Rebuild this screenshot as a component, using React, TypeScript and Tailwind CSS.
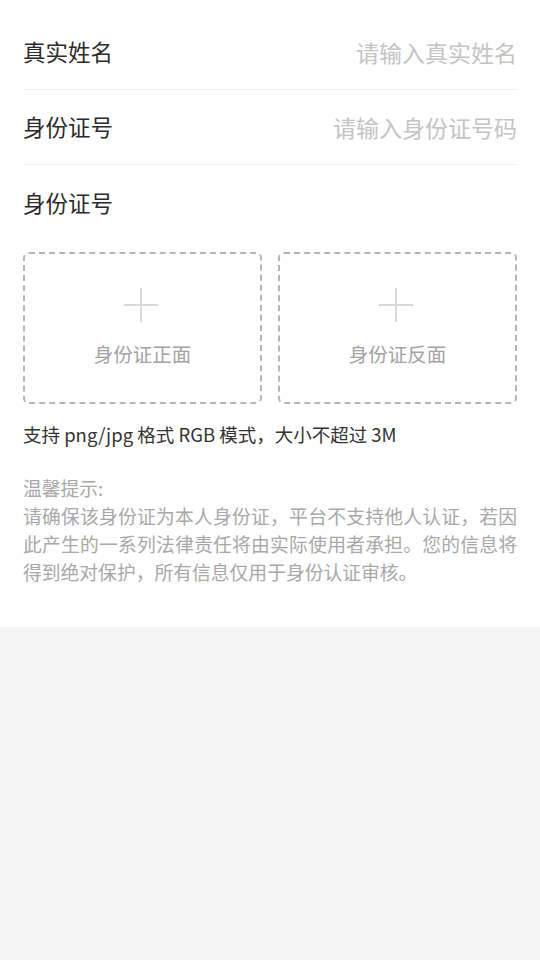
const font = { fontFamily: '"Noto Sans CJK SC", "Noto Sans", sans-serif' };

function FieldRow({ label, placeholder }: { label: string; placeholder: string }) {
  return (
    <div className="flex h-[75px] items-center justify-between border-b border-[#efefef]">
      <span className="text-[22.5px] text-[#2b2b2b]">{label}</span>
      <input
        className="w-[280px] bg-transparent text-right text-[23px] text-[#333333] outline-none placeholder:text-[#c4c4c4]"
        placeholder={placeholder}
        style={font}
      />
    </div>
  );
}

function UploadBox({ text }: { text: string }) {
  return (
    <div className="flex h-[152px] flex-col items-center justify-center rounded-[6px] border-2 border-dashed border-[#b5b5b5] pb-[4px]">
      <svg width="36" height="36" viewBox="0 0 36 36" className="-ml-[3px]">
        <path d="M18 1v34M1 18h34" stroke="#d9d9d9" strokeWidth="2" fill="none" />
      </svg>
      <span className="mt-[19px] text-[19.5px] leading-[24px] text-[#a3a3a3]">{text}</span>
    </div>
  );
}

export default function App() {
  return (
    <div className="min-h-screen bg-[#f5f5f5]" style={font}>
      <div className="bg-white px-[23px] pt-[15px] pb-[41px]">
        <FieldRow label="真实姓名" placeholder="请输入真实姓名" />
        <FieldRow label="身份证号" placeholder="请输入身份证号码" />
        <div className="flex h-[75px] items-center">
          <span className="text-[22.5px] text-[#2b2b2b]">身份证号</span>
        </div>
        <div className="mt-[12px] grid grid-cols-2 gap-[16px]">
          <UploadBox text="身份证正面" />
          <UploadBox text="身份证反面" />
        </div>
        <p className="mt-[18px] text-[18.5px] leading-[24px] text-[#333333]">
          支持 png/jpg 格式 RGB 模式，大小不超过 3M
        </p>
        <div className="mt-[28px] text-justify text-[18.8px] leading-[28px] text-[#a8a8a8]">
          <p>温馨提示:</p>
          <p>
            请确保该身份证为本人身份证，平台不支持他人认证，若因此产生的一系列法律责任将由实际使用者承担。您的信息将得到绝对保护，所有信息仅用于身份认证审核。
          </p>
        </div>
      </div>
    </div>
  );
}
